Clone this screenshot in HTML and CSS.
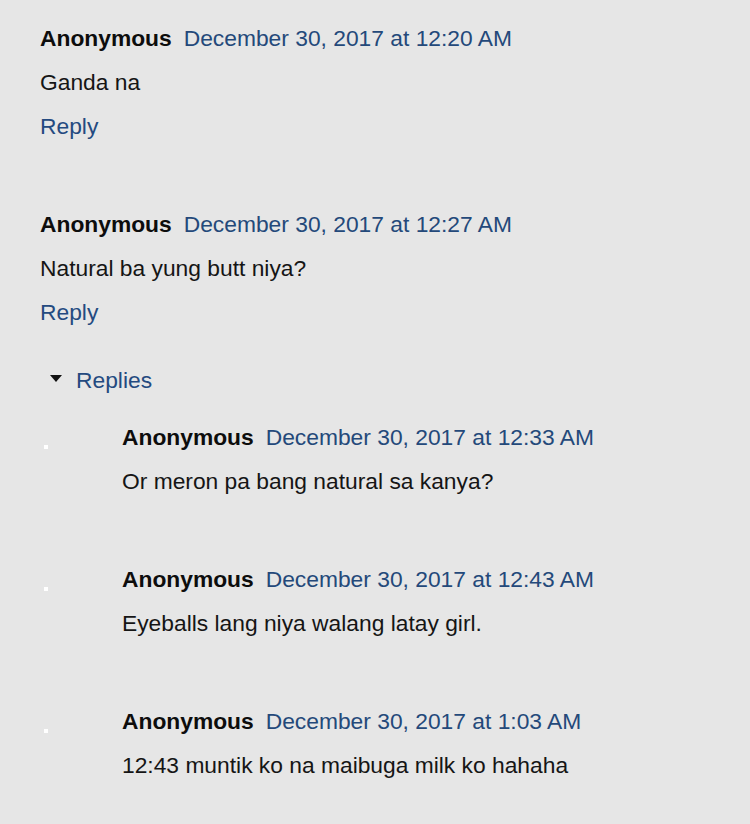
FILE: index.html
```html
<!DOCTYPE html>
<html lang="en">

<head>
  <meta charset="UTF-8">
  <meta name="viewport" content="width=device-width, initial-scale=1.0">
  <title>Comments</title>
  <link rel="stylesheet" href="styles.css">
</head>

<body>

  <!-- comment thread -->
  <div class="comments">

    <div class="comment">
      <div class="comment-header">
        <span class="user">Anonymous</span>
        <a href="#" class="date">December 30, 2017 at 12:20 AM</a>
      </div>
      <p class="comment-body">Ganda na</p>
      <a href="#" class="reply-link">Reply</a>
    </div>

    <div class="comment">
      <div class="comment-header">
        <span class="user">Anonymous</span>
        <a href="#" class="date">December 30, 2017 at 12:27 AM</a>
      </div>
      <p class="comment-body">Natural ba yung butt niya?</p>
      <a href="#" class="reply-link">Reply</a>

      <!-- replies section -->
      <div class="replies">
        <a href="#" class="replies-toggle">
          <svg class="toggle-arrow" width="12" height="7" viewBox="0 0 12 7">
            <path d="M0 0 L12 0 L6 7 Z" fill="#111" />
          </svg>
          Replies
        </a>

        <ul class="reply-list">
          <li class="reply-item">
            <span class="dot"></span>
            <div class="reply-content">
              <div class="comment-header">
                <span class="user">Anonymous</span>
                <a href="#" class="date">December 30, 2017 at 12:33 AM</a>
              </div>
              <p class="comment-body">Or meron pa bang natural sa kanya?</p>
            </div>
          </li>
          <li class="reply-item">
            <span class="dot"></span>
            <div class="reply-content">
              <div class="comment-header">
                <span class="user">Anonymous</span>
                <a href="#" class="date">December 30, 2017 at 12:43 AM</a>
              </div>
              <p class="comment-body">Eyeballs lang niya walang latay girl.</p>
            </div>
          </li>
          <li class="reply-item">
            <span class="dot"></span>
            <div class="reply-content">
              <div class="comment-header">
                <span class="user">Anonymous</span>
                <a href="#" class="date">December 30, 2017 at 1:03 AM</a>
              </div>
              <p class="comment-body">12:43 muntik ko na maibuga milk ko hahaha</p>
            </div>
          </li>
        </ul>
      </div>
    </div>

  </div>

</body>

</html>
```

FILE: styles.css
```css
/* page */
body {
  font-family: Arial, "Liberation Sans", sans-serif;
  font-size: 22.8px;
  line-height: 44px;
  margin: 0;
  padding: 16px 0 0 40px;
  background-color: #e6e6e6;
  color: #151515;
}

a {
  text-decoration: none;
}

/* comment blocks */
.comment {
  margin-bottom: 54px;
}

.comment-header {
  display: flex;
  align-items: baseline;
}

.user {
  font-weight: bold;
  color: #0d0d0d;
  margin-right: 12px;
}

.date {
  color: #24497a;
}

.comment-body {
  margin: 0;
}

.reply-link {
  display: block;
  color: #244a80;
}

/* replies */
.replies {
  margin-top: 24px;
}

.replies-toggle {
  display: flex;
  align-items: center;
  color: #244a80;
  padding-left: 10px;
}

.toggle-arrow {
  margin-right: 14px;
  margin-top: -4px;
}

.reply-list {
  list-style: none;
  margin: 13px 0 0 0;
  padding: 0;
}

.reply-item {
  display: flex;
  margin-bottom: 54px;
}

.dot {
  width: 4px;
  height: 4px;
  background-color: #fff;
  margin: 30px 0 0 4px;
  flex-shrink: 0;
}

.reply-content {
  margin-left: 74px;
}
```
